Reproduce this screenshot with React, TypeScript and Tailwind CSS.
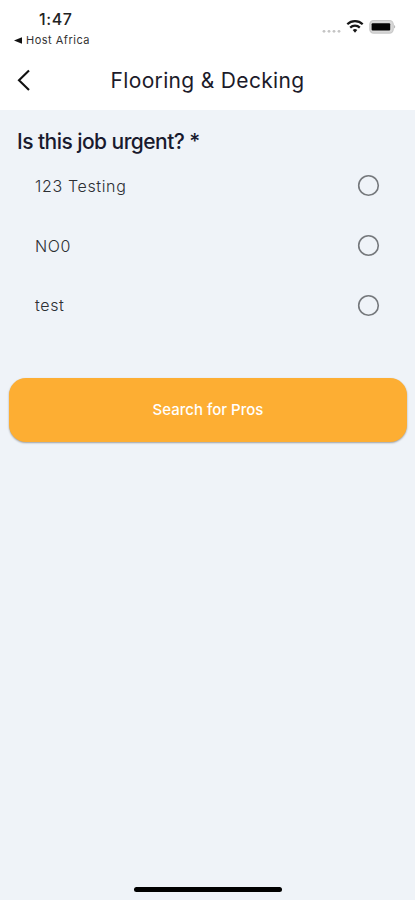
import { useState } from 'react'

const options = [
  { id: '123', label: '123 Testing' },
  { id: 'no0', label: 'NO0' },
  { id: 'test', label: 'test' },
]

function StatusBar() {
  return (
    <div className="flex h-[50px] items-start justify-between">
      <div className="pl-[14px] pt-[9px]">
        <div className="pl-[25px] text-[16px] leading-[20px] font-medium tracking-[0.6px] text-[#222]">1:47</div>
        <div className="flex items-center gap-[4px] pt-px text-[11px] leading-[20px] tracking-[0.5px] text-[#333]">
          <svg width="8" height="7" viewBox="0 0 8 7">
            <path d="M8 0.2v6.6L0 3.5z" fill="#111" />
          </svg>
          <span>Host Africa</span>
        </div>
      </div>
      <div className="flex items-center pr-[18px] pt-[19px]">
        <svg width="20" height="16" viewBox="0 0 20 16" fill="#c4c4c4">
          <circle cx="2" cy="12.3" r="1.4" />
          <circle cx="7" cy="12.3" r="1.4" />
          <circle cx="12" cy="12.3" r="1.4" />
          <circle cx="17" cy="12.3" r="1.4" />
        </svg>
        <svg className="ml-[4px]" width="18" height="16" viewBox="0 0 18 16" fill="none" stroke="#161616" strokeWidth="2.2">
          <path d="M1.3 5.2a11 11 0 0 1 15.4 0" />
          <path d="M4.2 8.6a6.8 6.8 0 0 1 9.6 0" />
          <path d="M9 13.8l-2.3-2.7a3.3 3.3 0 0 1 4.6 0z" fill="#161616" stroke="none" />
        </svg>
        <svg className="ml-[5px]" width="28" height="16" viewBox="0 0 28 16">
          <rect x="0.8" y="1.5" width="23.4" height="12.6" rx="3.8" fill="#d9d9d9" stroke="#c8c8c8" strokeWidth="1.2" />
          <rect x="2.6" y="4.2" width="18.6" height="7.2" rx="1" fill="#050505" />
          <path d="M25.2 6c1.3 0.5 1.3 3 0 3.6z" fill="#aaa" />
        </svg>
      </div>
    </div>
  )
}

function Header() {
  return (
    <header className="bg-white">
      <StatusBar />
      <div className="grid h-[60px] grid-cols-[60px_1fr_60px] items-center">
        <button aria-label="Back" className="pl-[17px]">
          <svg width="14" height="22" viewBox="0 0 14 22" fill="none" stroke="#111" strokeWidth="2.1">
            <path d="M12 1.5L2 11.3l10 9.7" />
          </svg>
        </button>
        <h1 className="pt-[2px] text-center text-[21px] tracking-[0.33px] whitespace-nowrap text-[#1c1b2a]">Flooring &amp; Decking</h1>
      </div>
    </header>
  )
}

export default function App() {
  const [selected, setSelected] = useState<string | null>(null)

  return (
    <div className="flex h-[900px] w-[415px] flex-col bg-[#eff3f8] font-['Inter',sans-serif]">
      <Header />
      <main className="flex-1">
        <h2 className="pl-[17px] pt-[18px] text-[21px] leading-[28px] font-medium tracking-[-0.55px] text-[#191a2e]">
          <span>Is this job urgent? *</span>
        </h2>
        <div role="radiogroup">
          {options.map(option => (
            <button
              key={option.id}
              role="radio"
              aria-checked={selected === option.id}
              onClick={() => setSelected(option.id)}
              className="flex h-[59.7px] w-full items-center justify-between pl-[35px] pr-[35px]"
            >
              <span className="text-[16px] font-light tracking-[0.65px] text-[#2c2f34]">{option.label}</span>
              <svg width="23" height="23" viewBox="0 0 23 23" fill="none">
                <circle cx="11.5" cy="11.5" r="9.8" stroke="#75787c" strokeWidth="1.6" />
                {selected === option.id && <circle cx="11.5" cy="11.5" r="5.5" fill="#fdae33" />}
              </svg>
            </button>
          ))}
        </div>
        <div className="pl-[9px] pr-[8px] pt-[43px]">
          <button className="h-[64px] w-full rounded-[17px] bg-[#fdae33] text-[15px] font-medium text-white shadow-[0_1px_2px_rgba(0,0,0,0.35)]">
            <span>Search for Pros</span>
          </button>
        </div>
      </main>
      <div className="mb-[8px] h-[5px] w-[148px] self-center rounded-full bg-black" />
    </div>
  )
}
